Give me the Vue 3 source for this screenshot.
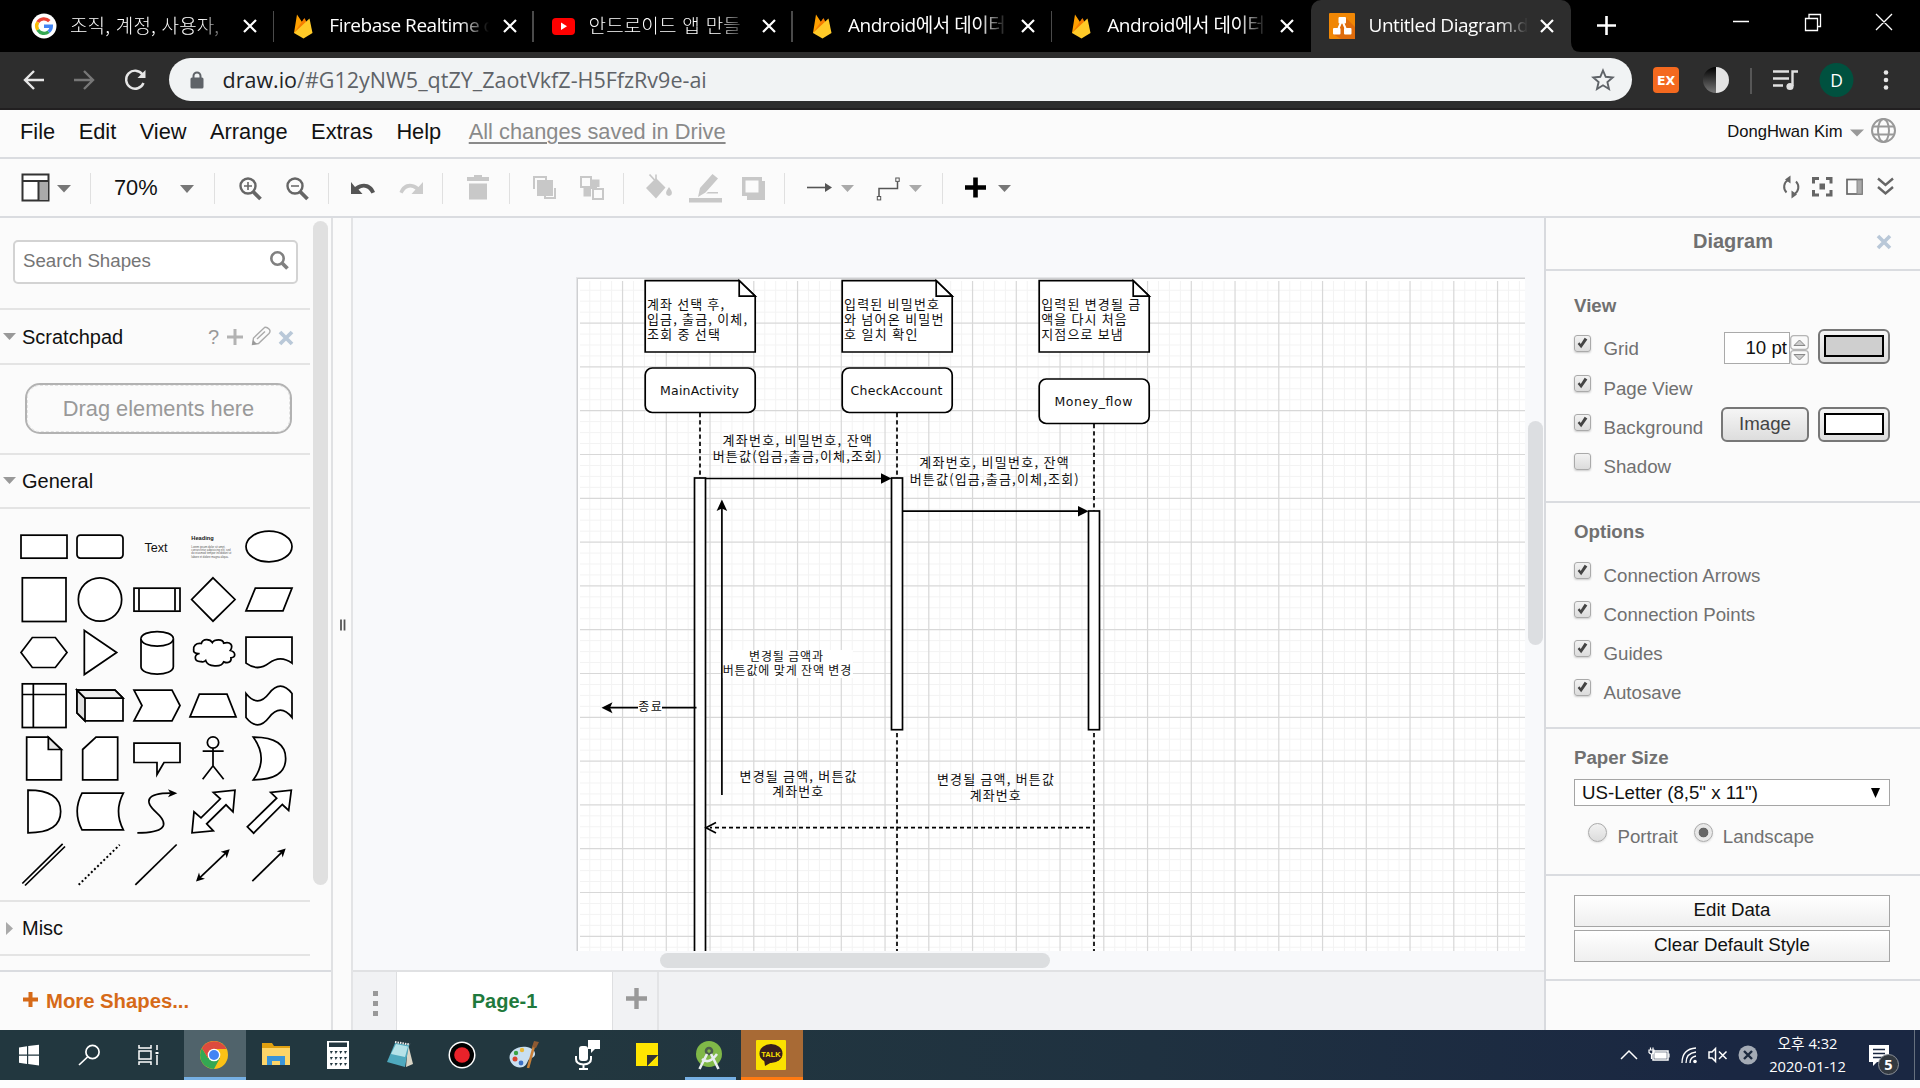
<script setup>
const tabs = [
  { icon: 'google', title: '조직, 계정, 사용자,', ko: true },
  { icon: 'firebase', title: 'Firebase Realtime d' },
  { icon: 'youtube', title: '안드로이드 앱 만들', ko: true },
  { icon: 'firebase', title: 'Android에서 데이터' },
  { icon: 'firebase', title: 'Android에서 데이터' },
  { icon: 'drawio', title: 'Untitled Diagram.d', active: true },
]
const menus = ['File', 'Edit', 'View', 'Arrange', 'Extras', 'Help']

const shapes = [
  '<rect x="-69" y="-34" width="138" height="69"/>',
  '<rect x="-69" y="-34" width="138" height="69" rx="10"/>',
  '<text x="-3" y="17" text-anchor="middle" font-size="38" class="t">Text</text>',
  '<g class="t"><text x="-65" y="-21" font-size="17" font-weight="bold" textLength="67">Heading</text><g font-size="8.4" fill="#555"><text x="-65" y="3" textLength="102">Lorem ipsum dolor sit amet,</text><text x="-65" y="13" textLength="118">consectetur adipisicing elit, sed</text><text x="-65" y="23" textLength="120">do eiusmod tempor incididunt ut</text><text x="-65" y="34" textLength="112">labore et dolore magna aliqua.</text></g></g>',
  '<ellipse rx="69" ry="46"/>',
  '<rect x="-65" y="-65" width="131" height="131"/>',
  '<circle r="65"/>',
  '<rect x="-69" y="-34" width="138" height="69"/><path d="M-54-34V34M54-34V34"/>',
  '<path d="M0-65L66 0L0 65L-64 0Z"/>',
  '<path d="M-69 34L-41-34H69L42 34Z"/>',
  '<path d="M-69 0L-35-45H34L69 0L34 45H-35Z"/>',
  '<path d="M-47-66L50 0L-47 66Z"/>',
  '<path d="M-48-41C-48-70 49-70 49-41V43C49 72-48 72-48 43Z"/><path d="M-48-41C-48-12 49-12 49-41"/>',
  '<path d="M-35-27C-52-30-60-18-58-8C-60 0-52 4-40 3C-58 6-58 28-36 27C-30 30-26 28-22 24C-16 44 26 46 32 28C46 34 56 28 54 16C70 14 68-2 52-6C62-22 52-34 32-28C30-42 4-40-2-30C-8-40-30-44-35-27Z"/>',
  '<path d="M-69-46H69V32Q34 6 0 32T-69 32Z"/>',
  '<rect x="-65" y="-65" width="131" height="131"/><path d="M-32-65V65M-65-33H65"/>',
  '<path d="M-69-46H45L69-22V46H-45L-69 22Z"/><path d="M-69-46L-45-22V46L-69 22Z" fill="#e0e0e0"/><path d="M-69-46H45L69-22H-45Z" fill="#eee"/>',
  '<path d="M-69-46H45L69 0L45 46H-69L-45 0Z"/>',
  '<path d="M-69 34L-41-34H42L69 34Z"/>',
  '<path d="M-69-36Q-34 8 0-36T69-36V36Q34-8 0 36T-69 36Z"/>',
  '<path d="M-52-64H13L52-27V64H-52Z"/><path d="M13-64V-27H52Z" fill="#e6e6e6"/>',
  '<path d="M-12-64H53V64H-52V-27Z"/>',
  '<path d="M-69-46H69V12H21L0 48V12H-69Z"/>',
  '<circle cy="-48" r="17"/><path d="M0-31V22M-31-22H32M-31 62L0 22L32 62"/>',
  '<path d="M-47-64Q50-64 50 0T-47 64Q0 0-47-64Z"/>',
  '<path d="M-48-64Q50-64 50 0T-48 64Z"/>',
  '<path d="M-54-55H70Q41 0 70 55H-54Q-83 0-54-55Z"/>',
  '<path d="M-59 64C20 64 40 42 0 5C-42-32-30-55 40-55" fill="none"/><path d="M61-55L33-67L40-55L33-43Z" fill="#000" stroke="none"/>',
  '<path d="M66-64L60 1L39-20L-19 37L1 58L-63 64L-57 1L-36 19L22-38L1-57Z"/>',
  '<path d="M67-64L59-3L40-21L-46 65L-65 46L23-40L5-57Z"/>',
  '<path d="M-65 57L56-62M-57 63L63-54"/>',
  '<path d="M-64 61L59-59" stroke-width="6" stroke-dasharray="6 7"/>',
  '<path d="M-65 61L59-60"/>',
  '<path d="M-44 44L42-38"/><path d="M-51 51L-42 24L-38 38L-24 43ZM50-46L41-19L37-33L23-38Z" fill="#000" stroke="none"/>',
  '<path d="M-50 50L42-40"/><path d="M50-48L41-21L37-35L23-40Z" fill="#000" stroke="none"/>',
]

const GX = 578.8
const GY = 279.3
const minorX = Array.from({ length: 87 }, (_, i) => GX + i * 10.9375).filter((_, i) => i % 4)
const minorY = Array.from({ length: 62 }, (_, i) => GY + i * 10.95).filter((_, i) => i % 4)
const majorX = Array.from({ length: 21 }, (_, i) => GX + (i + 1) * 43.75)
const majorY = Array.from({ length: 15 }, (_, i) => GY + (i + 1) * 43.8)

const notes = [645, 842, 1039]
const actors = [
  { x: 645, y: 368, t: 'MainActivity', w: 79 },
  { x: 842, y: 368, t: 'CheckAccount', w: 92 },
  { x: 1039, y: 379, t: 'Money_flow', w: 78 },
]
const noteLines = [
  [647, 308.5, 77, '계좌 선택 후,'], [647, 324, 100, '입금, 출금, 이체,'], [647, 338.5, 73, '조회 중 선택'],
  [844, 308.5, 95, '입력된 비밀번호'], [844, 324, 99.5, '와 넘어온 비밀번'], [844, 338.5, 73.5, '호 일치 확인'],
  [1041.2, 308.5, 99, '입력된 변경될 금'], [1041.2, 324, 85.5, '액을 다시 처음'], [1041.2, 338.5, 81.5, '지점으로 보냄'],
]
const labels = [
  [797.2, 444.5, 149.5, '계좌번호, 비밀번호, 잔액'], [797.2, 461, 169, '버튼값(입금,출금,이체,조회)'],
  [994, 466.5, 149.5, '계좌번호, 비밀번호, 잔액'], [994.2, 483.5, 169, '버튼값(입금,출금,이체,조회)'],
  [798, 780.5, 117, '변경될 금액, 버튼값'], [797.7, 795.5, 51, '계좌번호'],
  [995.4, 783.5, 117, '변경될 금액, 버튼값'], [995.2, 799.5, 51, '계좌번호'],
]
const viewRows = ['Grid', 'Page View', 'Background', 'Shadow']
const optionRows = ['Connection Arrows', 'Connection Points', 'Guides', 'Autosave']
</script>

<template>
  <div class="screen">
    <!-- Browser tab strip -->
    <div class="tabstrip">
      <div v-for="(t, i) in tabs" :key="i" class="tab" :class="{ active: t.active, last: i === 4, ko: t.ko }">
        <svg v-if="t.icon === 'google'" class="fav" viewBox="0 0 26 26">
          <circle cx="13" cy="13" r="12.5" fill="#fff" />
          <g fill="none" stroke-width="3.4">
            <path d="M18.3 8.2A7.3 7.3 0 0 0 6.8 9.2" stroke="#ea4335" />
            <path d="M6.8 9.2a7.3 7.3 0 0 0 0 7.7" stroke="#fbbc05" />
            <path d="M6.8 16.9a7.3 7.3 0 0 0 10.8 1.8" stroke="#34a853" />
            <path d="M17.6 18.7A7.3 7.3 0 0 0 20.3 13.2H13" stroke="#4285f4" />
          </g>
        </svg>
        <svg v-else-if="t.icon === 'firebase'" class="fav" viewBox="0 0 26 26">
          <path d="M4 20L7 1.5L12 9L14 6L22 20Z" fill="#ffa000" />
          <path d="M4 20L14.5 5L17 10Z" fill="#f57c00" />
          <path d="M4 20L19.5 5.5L22.5 20L13.5 25.5Z" fill="#ffca28" />
        </svg>
        <svg v-else-if="t.icon === 'youtube'" class="fav" viewBox="0 0 26 26">
          <rect x="2" y="5" width="23" height="17" rx="4" fill="#f00" /><path d="M11 9.5V17L17 13.2Z" fill="#fff" />
        </svg>
        <svg v-else class="fav" viewBox="0 0 26 26">
          <rect width="26" height="26" rx="1" fill="#f08705" /><path d="M16 4L26 14V26H12L4 21Z" fill="#df6c0c" />
          <path d="M13 7L8 19M13 7L18 19" stroke="#fff" stroke-width="2" />
          <g fill="#fff"><rect x="9.5" y="4" width="7.5" height="6.5" rx="1" /><rect x="4" y="15" width="7.5" height="6.5" rx="1" /><rect x="15" y="15" width="7.5" height="6.5" rx="1" /></g>
        </svg>
        <span class="title">{{ t.title }}</span>
        <svg class="close" viewBox="0 0 14 14"><path d="M1 1L13 13M13 1L1 13" stroke="#fff" stroke-width="2.2" /></svg>
      </div>
      <svg class="stripend" viewBox="1571 0 349 52" fill="none" stroke="#fff">
        <path d="M1571 52h10q-10 0-10-10z" fill="#2d2d2d" stroke="none" />
        <path d="M1597 25.5h19M1606.500 16v19" stroke-width="2.6" />
        <path d="M1733 21.500h16M1805.500 18.500h12v12h-12zM1809 18v-3.500h11.500v12h-3M1876 14l16 16M1892 14l-16 16" stroke-width="1.3" />
      </svg>
    </div>

    <!-- Navigation bar -->
    <div class="navbar">
      <svg class="navleft" viewBox="0 52 169 56" fill="none" stroke-width="2.4">
        <path d="M44 80H25M34 71L25 80L34 89" stroke="#e6e6e6" />
        <path d="M74 80H93M84 71L93 80L84 89" stroke="#777" />
        <path d="M142.500 74.500A9 9 0 1 0 143.500 83" stroke="#e6e6e6" /><path d="M145.500 70V78H137.500Z" fill="#e6e6e6" />
      </svg>
      <div class="omnibox">
        <svg width="14" height="18" viewBox="0 0 14 18"><rect x="0.500" y="6.500" width="13" height="11" rx="1.500" fill="#5f6368" /><path d="M3.500 8V5a3.500 3.500 0 0 1 7 0V8" fill="none" stroke="#5f6368" stroke-width="2" /></svg>
        <span class="url"><b>draw.io</b>/#G12yNW5_qtZY_ZaotVkfZ-H5FfzRv9e-ai</span>
        <svg width="24" height="24" viewBox="0 0 24 24"><path d="M12 2.500L14.700 8.800L21.700 9.500L16.400 14.100L18 21L12 17.300L6 21L7.600 14.100L2.300 9.500L9.300 8.800Z" fill="none" stroke="#5f6368" stroke-width="1.900" /></svg>
      </div>
      <svg class="navright" viewBox="1632 52 288 56">
        <defs><linearGradient id="cg" x2="0" y2="1"><stop stop-color="#000" /><stop offset="1" stop-color="#777" /></linearGradient></defs>
        <rect x="1653" y="67" width="26" height="26" rx="4" fill="#f4691f" />
        <text x="1666" y="84.500" text-anchor="middle" font-size="12.500" font-weight="bold" fill="#fff" font-family="DejaVu Sans">EX</text>
        <path d="M1716 67a13 13 0 0 0 0 26z" fill="url(#cg)" /><path d="M1716 67a13 13 0 0 1 0 26z" fill="#e4e4e4" />
        <path d="M1751 68v26" stroke="#666" stroke-width="1.500" />
        <path d="M1773 71.500h16M1773 78.500h16M1773 85.500h10M1798 71.500h-5.500V86" stroke="#e0e0e0" stroke-width="2.400" fill="none" /><circle cx="1790" cy="86.500" r="3.600" fill="#e0e0e0" />
        <circle cx="1836.500" cy="80" r="17" fill="#00513f" />
        <text x="1836.500" y="86.500" text-anchor="middle" font-size="17.500" fill="#fff" font-family="Open Sans">D</text>
        <g fill="#e6e6e6"><circle cx="1886" cy="72.500" r="2.300" /><circle cx="1886" cy="80" r="2.300" /><circle cx="1886" cy="87.500" r="2.300" /></g>
      </svg>
    </div>

    <!-- Editor menu bar -->
    <div class="menubar">
      <span v-for="m in menus" :key="m">{{ m }}</span>
      <u>All changes saved in Drive</u>
      <span class="user">DongHwan Kim</span>
      <svg class="globe" viewBox="1843 110 77 47" fill="none" stroke="#999" stroke-width="2">
        <path d="M1850 129.500h14l-7 7z" fill="#999" stroke="none" />
        <circle cx="1883.500" cy="130.500" r="11.500" /><ellipse cx="1883.500" cy="130.500" rx="5.500" ry="11.500" /><path d="M1873 126.500h21M1873 134.500h21" />
      </svg>
    </div>

    <!-- Editor toolbar -->
    <div class="toolbar">
      <svg class="g g1" viewBox="0 159 91 57"><rect x="22.500" y="174.500" width="26" height="26" fill="#fff" stroke="#333" stroke-width="2" /><rect x="39" y="181" width="9" height="19" fill="#aaa" /><path d="M22 181h27M38.500 181v20" stroke="#333" stroke-width="2" /><path d="M57 185h14l-7 7.500z" fill="#777" /></svg>
      <div class="g g2"><span>70%</span><svg viewBox="0 0 14 8"><path d="M0 0h14l-7 8z" fill="#777" /></svg></div>
      <svg class="g g3" viewBox="215 159 114 57" fill="none" stroke="#666">
        <g stroke-width="2.400"><circle cx="248" cy="186" r="7.500" /><circle cx="295" cy="186" r="7.500" /></g><path d="M253 191.500L260.500 199M300 191.500L307.500 199" stroke-width="3.800" /><path d="M244 186h8M248 182v8M291 186h8" stroke-width="1.600" />
      </svg>
      <svg class="g g3" viewBox="329 159 114 57"><path d="M351 182v12h11.500l-4-4.500c5-4 10-2 13 4l3.500-1.500c-3-8.500-12-11-20-5z" fill="#555" /><path d="M423 182v12h-11.500l4-4.500c-5-4-10-2-13 4l-3-1.500c3-8.500 11-11 19-5z" fill="#ccc" /></svg>
      <svg class="g g5" viewBox="443 159 67 57" fill="#c8c8c8"><path d="M467 177h7v-2h8v2h7v4h-22zM469 183.500h18v16h-18z" /></svg>
      <svg class="g g3" viewBox="510 159 114 57" fill="none" stroke="#c8c8c8" stroke-width="2"><rect x="538" y="181" width="14" height="14" fill="#c8c8c8" /><path d="M535 188h-1v-11h12v3M555 188v10h-10v-3" /><rect x="581" y="177" width="10" height="10" /><path d="M592 181h6v6M585 188v7h6" fill="#c8c8c8" stroke-width="3" /><path d="M586 182h10v6h-6v6h-4z" fill="#c8c8c8" /><rect x="593" y="189" width="10" height="10" fill="#fbfbfb" /><rect x="581" y="177" width="10" height="10" fill="#fbfbfb" /></svg>
      <svg class="g g7" viewBox="624 159 161 57" fill="#c8c8c8"><path d="M649.500 174.500l6 6.500" stroke="#c8c8c8" stroke-width="1.800" /><path d="M656 174.500v9" stroke="#c8c8c8" stroke-width="1.600" /><path d="M656 178l9.500 9.500l-9.500 11l-10-10.500zM669 187q6 8 0 9q-6-1 0-9zM689 198h33v4.500h-33zM698 197l2-9l12.500-14l5.500 4.500l-12.500 14zM708 192h10v1.500h-12z" /><path d="M742 177h20v4h3v19h-18v-4h-5zM745.500 180.500v12h13v-12z" fill-rule="evenodd" /></svg>
      <svg class="g g8" viewBox="785 159 158 57" fill="none" stroke="#555"><path d="M807 187.500h20" stroke-width="1.600" /><path d="M825 183l7 4.500l-7 4.500z" fill="#555" stroke="none" /><path d="M841 185h13l-6.500 7zM909 185h13l-6.500 7z" fill="#aaa" stroke="none" /><path d="M879 196v-7.500h18.500V182" stroke-width="1.500" /><rect x="877.300" y="196.500" width="3.400" height="3.400" /><rect x="895.800" y="178" width="3.400" height="3.400" /></svg>
      <svg class="g g9" viewBox="943 159 100 57"><path d="M965 187.500h21M975.500 177.500v20" stroke="#000" stroke-width="4.600" /><path d="M998 185h13l-6.500 7z" fill="#777" /></svg>
      <svg class="g gr" viewBox="1770 159 150 57" fill="none" stroke="#666" stroke-width="2">
        <path d="M1788 180a8 8 0 0 0-1.500 12.500M1794.500 194a8 8 0 0 0 1.500-12.500" /><path d="M1788 187" /><path d="M1790.500 175.500v8l-5.500-4zM1791.500 190.500v8l5.500-4z" fill="#666" stroke="none" />
        <path d="M1819 178.500h-5.500v5M1826 178.500h5v5M1819 195h-5.500v-5M1826 195h5v-5" stroke-width="3" /><rect x="1819.500" y="183.500" width="5.500" height="6" fill="#666" stroke="none" />
        <rect x="1847" y="179.500" width="15" height="14.500" stroke-width="1.700" /><path d="M1857 180v14h5v-14z" fill="#aaa" stroke-width="1" stroke="#888" />
        <path d="M1878 178.500l7.500 6.500l7.500-6.500M1878 187l7.500 6.500l7.500-6.500" stroke-width="2.400" />
      </svg>
    </div>

    <!-- Editor body -->
    <div class="body">
      <aside class="side">
        <div class="sidescroll">
          <div class="sections">
            <div class="searchwrap">
              <div class="search"><span>Search Shapes</span>
                <svg width="19" height="20" viewBox="0 0 19 20" fill="none" stroke="#808080"><circle cx="7.500" cy="7.500" r="6.200" stroke-width="2.600" /><path d="M12 12L17.500 17.500" stroke-width="3.800" /></svg>
              </div>
            </div>
            <div class="head h1">
              <svg class="car" viewBox="0 0 13 8"><path d="M0 0h13l-6.500 7z" fill="#999" /></svg><span>Scratchpad</span>
              <i>?</i>
              <svg class="padicons" viewBox="226 324 72 24" fill="none">
                <path d="M227 336h16M235 328v16" stroke="#b3b3b3" stroke-width="3" />
                <path d="M252.500 343.500l1-6.500l11-10.500q2-1 4.500 1.500q2 2 0 4.500l-10.500 10zM257 338l8-7.500M260 341l8-7.500" stroke="#aaa" stroke-width="1.400" /><path d="M252 344l1-5l4 4z" fill="#999" />
                <path d="M280 331l12 12M292 331l-12 12" stroke="#b9c8d8" stroke-width="3.800" />
              </svg>
            </div>
            <div class="drop"><div>Drag elements here</div></div>
            <div class="head h2"><svg class="car" viewBox="0 0 13 8"><path d="M0 0h13l-6.500 7z" fill="#999" /></svg><span>General</span></div>
            <div class="palette">
              <svg v-for="(s, i) in shapes" :key="i" viewBox="-84 -79.500 168 159" v-html="s"></svg>
            </div>
            <div class="head h3"><svg class="car r" viewBox="0 0 8 13"><path d="M0 0v13l7-6.500z" fill="#aaa" /></svg><span>Misc</span></div>
          </div>
          <div class="sbar"></div>
        </div>
        <div class="more">
          <svg width="15" height="15" viewBox="0 0 15 15"><path d="M0 7.500h15M7.500 0v15" stroke="#d66a18" stroke-width="4" /></svg>More Shapes...
        </div>
      </aside>
      <div class="split"><svg width="8" height="12" viewBox="0 0 8 12"><path d="M2 0.500v11M5.500 0.500v11" stroke="#555" stroke-width="1.800" /></svg></div>

      <main class="center">
        <div class="stage">
          <svg class="diagram" viewBox="353 218 1172 733" fill="#fff" stroke="#000" stroke-width="1.700">
            <rect x="576" y="277" width="960" height="700" fill="#e4e5e7" stroke="none" />
            <rect x="577.500" y="278.500" width="960" height="700" fill="#fff" stroke="#cfd0d2" stroke-width="1" />
            <g stroke="#f3f3f3" stroke-width="1"><path v-for="x in minorX" :key="'a' + x" :d="`M${x} 281V951`" /><path v-for="y in minorY" :key="'b' + y" :d="`M580 ${y}H1525`" /></g>
            <g stroke="#d8d8d8" stroke-width="1.200"><path v-for="x in majorX" :key="'c' + x" :d="`M${x} 281V951`" /><path v-for="y in majorY" :key="'d' + y" :d="`M580 ${y}H1525`" /></g>
            <g v-for="x in notes" :key="'n' + x"><path :d="`M${x + 0.200} 280.700h94l16 15.500v55.800h-110z`" /><path :d="`M${x + 94.200} 280.700v15.500h16z`" /></g>
            <g stroke-dasharray="4.200 3"><path d="M700 413V478M897 413V478M1094 424V511M897 733V951M1094 733V951" /></g>
            <g v-for="a in actors" :key="a.t">
              <rect :x="a.x + 0.200" :y="a.y" width="110" height="44.500" rx="7" />
              <text class="lat" :x="a.x + 54.500" :y="a.y + 27" text-anchor="middle" :textLength="a.w">{{ a.t }}</text>
            </g>
            <rect x="694.500" y="478" width="11" height="490" /><rect x="891.500" y="478" width="11" height="251.700" /><rect x="1088.500" y="511" width="11" height="218.700" />
            <path d="M706 478.500H884M903 511.200H1081M721.900 795V508M696.500 707.700H608" />
            <path d="M891.500 478.500l-10.500-5.200v10.400zM1088.500 511.200l-10.500-5.200v10.400zM721.900 499.500l-5.300 11.500l5.300-2.500l5.300 2.500zM601.500 707.700l11-5.500l-2.500 5.500l2.500 5.500z" fill="#000" stroke="none" />
            <path d="M1090 827.700H710" stroke-dasharray="4 3" /><path d="M716 822.500l-10 5.200l10 5.200" fill="none" />
            <rect x="722.900" y="650" width="130" height="28" stroke="none" /><rect x="638" y="700" width="24" height="13" stroke="none" />
            <text v-for="(l, i) in noteLines" :key="'l' + i" :x="l[0]" :y="l[1]" :textLength="l[2]">{{ l[3] }}</text>
            <g text-anchor="middle">
              <text v-for="(l, i) in labels" :key="'m' + i" :x="l[0]" :y="l[1]" :textLength="l[2]">{{ l[3] }}</text>
              <g class="small"><text x="786" y="660.800" textLength="74">변경될 금액과</text><text x="787" y="674.800" textLength="128.500">버튼값에 맞게 잔액 변경</text><text x="650" y="710.500" textLength="23.500">종료</text></g>
            </g>
          </svg>
          <div class="vtrack"><div class="vthumb"></div></div>
        </div>
        <div class="htrack"><div class="hthumb"></div></div>
        <div class="pages">
          <div class="dots"><i></i><i></i><i></i></div>
          <div class="page">Page-1</div>
          <div class="add"><svg width="21" height="21" viewBox="0 0 21 21"><path d="M0 10.500h21M10.500 0v21" stroke="#999" stroke-width="4.400" /></svg></div>
        </div>
      </main>

      <aside class="format">
        <div class="ftitle"><span>Diagram</span><svg width="16" height="16" viewBox="0 0 16 16"><path d="M2 2l12 12M14 2L2 14" stroke="#b9c8d8" stroke-width="3.600" /></svg></div>
        <section class="s1">
          <h4>View</h4>
          <div v-for="(r, i) in viewRows" :key="r" class="row">
            <span class="chk"><svg v-if="i < 3" viewBox="0 0 17 17"><path d="M3 9l4 5l7-10l-3-2l-4.500 7l-1.500-2z" fill="#444" /></svg></span>
            <label>{{ r }}</label>
            <template v-if="i === 0">
              <span class="num">10 pt</span>
              <svg class="spin" viewBox="0 0 19 30" fill="#fafafa" stroke="#b5b5b5"><rect x="0.700" y="0.700" width="17.600" height="13.600" rx="3" stroke-width="1.300" /><rect x="0.700" y="15.700" width="17.600" height="13.600" rx="3" stroke-width="1.300" /><path d="M4 10.500h11l-5.500-5.500zM4 19.500h11l-5.500 5.500z" fill="#ccc" stroke="#888" /></svg>
              <span class="color"><b class="grey"></b></span>
            </template>
            <template v-if="i === 2"><span class="imgbtn">Image</span><span class="color c2"><b></b></span></template>
          </div>
        </section>
        <section class="s2">
          <h4>Options</h4>
          <div v-for="r in optionRows" :key="r" class="row">
            <span class="chk"><svg viewBox="0 0 17 17"><path d="M3 9l4 5l7-10l-3-2l-4.500 7l-1.500-2z" fill="#444" /></svg></span><label>{{ r }}</label>
          </div>
        </section>
        <section class="s3">
          <h4>Paper Size</h4>
          <div class="select"><span>US-Letter (8,5" x 11")</span><svg width="9" height="10" viewBox="0 0 9 10"><path d="M0 0h9l-4.500 10z" /></svg></div>
          <div class="radios"><span class="radio"></span><label>Portrait</label><span class="radio on"></span><label>Landscape</label></div>
        </section>
        <section class="s4"><div class="btn">Edit Data</div><div class="btn">Clear Default Style</div></section>
      </aside>
    </div>

    <!-- Windows taskbar -->
    <div class="taskbar">
      <div class="app"><svg viewBox="-30 -25 60 50" fill="#fff"><path d="M-10-7.500L-2-8.700V-.5H-10zM-.8-8.900L10-10.300V-.5H-.8zM-10 .8H-2V9L-10 7.800zM-.8 .8H10V10.500L-.8 9z" /></svg></div>
      <div class="app"><svg viewBox="-30 -25 60 50" fill="none" stroke="#fff" stroke-width="1.700"><circle cx="3.500" cy="-3" r="6.600" /><path d="M-1.500 2L-10 10" /></svg></div>
      <div class="app tv"><svg viewBox="-30 -25 60 50" fill="none" stroke="#fff" stroke-width="1.500"><path d="M-9-10V-7H3V-10M-9 10V7H3V10M9-10V-5M9 0V10" /><rect x="-9" y="-4" width="12" height="8" /><path d="M7.500-3h3v2h-3z" fill="#fff" stroke="none" /></svg></div>
      <div class="app on"><svg viewBox="-30 -25 60 50"><circle r="14" fill="#fbc116" /><path d="M-12.100-7A14 14 0 0 0 0 14L6 3L-6 3Z" fill="#34a853" /><path d="M-12.100-7L-6 3L0-6H12.500A14 14 0 0 0-12.100-7Z" fill="#dd4b3e" /><circle r="6.300" fill="#fff" /><circle r="5" fill="#4285f4" /></svg></div>
      <div class="app"><svg viewBox="-30 -25 60 50"><path d="M-14-12h10l2 3h16v19h-28z" fill="#e0a010" /><path d="M-14-7h28v17h-28z" fill="#fdd568" /><path d="M-9 10V1h18v9h-5V6h-8v4z" fill="#3a94d8" /></svg></div>
      <div class="app"><svg viewBox="-30 -25 60 50"><path d="M-11-14h22V14h-22z" fill="#fff" /><path d="M-9-12.500H9V-8H-9z" fill="#22363f" /><g fill="#22363f"><path v-for="k in 12" :key="k" :d="`M${-8 + ((k - 1) % 4) * 4.700} ${-4 + Math.floor((k - 1) / 4) * 6}h3l-2 3z`" /></g></svg></div>
      <div class="app"><svg viewBox="-30 -25 60 50"><path d="M8-11L13 9L6 12Z" fill="#d9d5c6" /><path d="M-5-12L9-10L5 12L-13 7Z" fill="#4fa9be" /><path d="M-4-11L8-8.500L5 2L-9-1Z" fill="#b5e2e8" /><path d="M-5-13l15 2.500" stroke="#eee" stroke-width="2" stroke-dasharray="1.500 1" /></svg></div>
      <div class="app"><svg viewBox="-30 -25 60 50"><circle r="13.500" fill="#fff" /><circle r="12" /><circle r="7.800" fill="#e8222a" /></svg></div>
      <div class="app"><svg viewBox="-30 -25 60 50"><path d="M-14 5C-17-3-6-10 3-8C13-6 13 2 7 3C3 4 4 10-1 12C-8 14-13 9-14 5Z" fill="#c9dff0" /><circle cx="-9" cy="4" r="2.500" fill="#d8442e" /><circle cx="-8" cy="-2" r="2.200" fill="#3aa345" /><circle cx="-2" cy="-5" r="2.200" fill="#e8b83a" /><circle cx="-3" cy="8" r="2.400" fill="#3b6fc4" /><path d="M10-9L4 13" stroke="#c98038" stroke-width="2.600" /><path d="M8-8l2-6l5 1l-3 6z" fill="#8d5a33" /></svg></div>
      <div class="app"><svg viewBox="-30 -25 60 50"><rect x="-7" y="-9" width="9" height="15" rx="3" fill="#fff" /><path d="M2-15h12v9h-5l-4 4v-4h-3z" fill="#fff" /><path d="M-10 1v3q0 5 7.500 5.500q7.500-.5 7.500-5.500V1M-2.500 9v5M-7 14h9" fill="none" stroke="#fff" stroke-width="2" /></svg></div>
      <div class="app"><svg viewBox="-30 -25 60 50"><path d="M-11-12H11V0H0V11H-11z" fill="#ffe500" /><path d="M0 11H11V0z" fill="#ffe500" /><path d="M0 11V0H11z" fill="#333" /></svg></div>
      <div class="app run"><svg viewBox="-30 -25 60 50"><circle cy="-1" r="13" fill="#80b848" /><circle cy="-4" r="3" fill="none" stroke="#4c5d4d" stroke-width="2.600" /><path d="M-9.500 14L-2-1M9.500 14L2-1M-7 4Q0 10 8-1" fill="none" stroke="#e8edf0" stroke-width="2.600" /></svg></div>
      <div class="app talk"><svg viewBox="-30 -25 60 50"><rect x="-15" y="-15" width="30" height="30" rx="1" fill="#fae100" /><ellipse cy="-1.500" rx="11.500" ry="9.500" fill="#371d1e" /><path d="M-7 4L-6 11L1 7Z" fill="#371d1e" /><text y="1.500" text-anchor="middle" font-size="7.500" font-weight="bold" fill="#fae100" font-family="Liberation Sans">TALK</text></svg></div>
      <svg class="tray" viewBox="1610 1030 155 50" fill="none" stroke="#fff" stroke-width="1.500">
        <path d="M1621 1059l8-8l8 8" /><rect x="1653" y="1051" width="15" height="9" /><path d="M1655 1053h11v5h-11z" fill="#fff" /><path d="M1669 1053.500v4M1649 1050v2.500q2.500 3 5 0v-2.500zM1650.500 1047.500v2M1653 1047.500v2M1651.500 1054v5" stroke-width="1.200" />
        <path d="M1682 1063q0-14 14-15M1686 1063q0-10 10-11M1690 1063q0-6 6-7" stroke-width="1.300" /><circle cx="1695" cy="1061.500" r="1.800" fill="#fff" stroke="none" />
        <path d="M1709 1052h3l3.500-3.500v13l-3.500-3.500h-3zM1719 1051.500l7.500 7.500M1726.500 1051.500l-7.500 7.500" />
        <circle cx="1748" cy="1055" r="9.500" fill="#a4abb5" stroke="none" /><path d="M1744 1051l8 8M1752 1051l-8 8" stroke="#1c2a3f" stroke-width="2.400" />
      </svg>
      <div class="clock"><span>오후 4:32</span><span>2020-01-12</span></div>
      <svg class="notif" viewBox="1850 1030 70 50"><path d="M1869 1045h20v17h-12l-4 4v-4h-4z" fill="#fff" /><path d="M1873 1049.500h12M1873 1053.500h12M1873 1057.500h12" stroke="#1a2740" stroke-width="1.300" /><circle cx="1888.500" cy="1064.500" r="10" fill="#333940" stroke="#8a8f96" /><text x="1888.500" y="1070" text-anchor="middle" font-size="14.500" font-weight="bold" fill="#fff" font-family="Open Sans">5</text><path d="M1914.500 1030v50" stroke="#66707e" /></svg>
    </div>
  </div>
</template>

<style>
body { background: #fff; overflow: hidden; }
</style>

<style scoped>
* { box-sizing: border-box; }
.screen { width: 1920px; height: 1088px; background: #fdfdfd; font-family: "Liberation Sans", "Noto Sans CJK KR", sans-serif; display: flex; flex-direction: column; overflow: hidden; color: #111; white-space: nowrap; }
svg { display: block; flex: none; }

.tabstrip { height: 52px; background: #000; display: flex; padding-left: 15px; flex: none; }
.tab { width: 259.3px; display: flex; align-items: center; padding: 0 17px 0 16px; color: #fff; font: 19px "Open Sans", "Noto Sans CJK KR", sans-serif; position: relative; flex: none; }
.tab::after { content: ""; position: absolute; right: 0; top: 11px; height: 31px; width: 1.500px; background: #4a4a4a; }
.tab.active::after, .tab.last::after { display: none; }
.tab.last { border-bottom-right-radius: 10px; }
.tab.active { background: #2d2d2d; border-radius: 10px 10px 0 0; padding-left: 18px; }
.fav { width: 26px; height: 26px; }
.title { margin-left: 13px; width: 160px; overflow: hidden; letter-spacing: -.45px; line-height: 48px; padding-bottom: 3px; -webkit-mask-image: linear-gradient(90deg, #000 82%, transparent); mask-image: linear-gradient(90deg, #000 82%, transparent); }
.ko .title { font-family: "Noto Sans CJK KR", sans-serif; letter-spacing: .1px; word-spacing: 1.500px; font-weight: 300; }
.close { width: 14px; height: 14px; margin-left: auto; }
.stripend { width: 349px; height: 52px; margin-left: 0; }

.navbar { height: 58px; background: #2d2d2d; display: flex; border-bottom: 2px solid #211f20; flex: none; }
.navleft { width: 169px; height: 56px; }
.omnibox { width: 1463px; height: 43px; margin-top: 6px; border-radius: 22px; background: #f1f3f4; display: flex; align-items: center; padding: 0 17px 0 21px; }
.url { flex: 1; margin-left: 18.500px; font: 21.500px "Open Sans", sans-serif; color: #5f6368; }
.url b { font-weight: 400; color: #202124; }
.navright { width: 288px; height: 56px; }

.menubar { height: 49px; background: #fbfbfb; border-bottom: 2px solid #dadce0; display: flex; align-items: center; padding: 0 0 3px 20px; gap: 23.500px; font-size: 21.800px; flex: none; }
.menubar u { color: #8a8a8a; margin-left: 4px; text-underline-offset: 3px; text-decoration-thickness: 1.500px; }
.user { margin-left: auto; margin-right: -23px; font-size: 16.600px; }
.globe { width: 77px; height: 47px; margin: 3px 0 0; }

.toolbar { height: 59px; background: #fbfbfb; border-bottom: 2px solid #dadce0; display: flex; align-items: center; flex: none; }
.g { height: 57px; flex: none; background: linear-gradient(#e0e0e0, #e0e0e0) right 14px / 1.500px 31px no-repeat; }
.g1 { width: 91px; }
.g2 { width: 124px; display: flex; align-items: center; justify-content: space-between; padding: 1px 21px 0 23px; font-size: 21.800px; }
.g2 svg { width: 14px; height: 8px; margin-top: 1px; }
.g3 { width: 114px; }
.g5 { width: 67px; }
.g7 { width: 161px; }
.g8 { width: 158px; }
.g9 { width: 100px; background: none; }
.gr { width: 150px; margin-left: auto; background: none; }

.body { height: 812px; display: flex; flex: none; }
.side { width: 333px; background: #fbfbfb; border-right: 2px solid #e0e1e3; display: flex; flex-direction: column; }
.sidescroll { height: 752px; display: flex; justify-content: space-between; }
.sections { width: 310px; display: flex; flex-direction: column; }
.searchwrap { height: 92px; border-bottom: 2px solid #e4e4e4; padding: 22px 12px 0 13px; }
.search { height: 44px; border: 2px solid #d3d3d3; border-radius: 5px; background: #fff; display: flex; align-items: center; justify-content: space-between; padding: 0 7px 2px 8px; font-size: 18.700px; color: #757575; }
.search svg { margin-bottom: 1px; }
.head { display: flex; align-items: center; border-bottom: 2px solid #e4e4e4; font-size: 20px; flex: none; }
.head span { margin-left: 6px; }
.car { width: 13px; height: 8px; margin-left: 3px; }
.car.r { width: 8px; height: 13px; margin-left: 6px; margin-right: 2px; }
.h1 { height: 55px; }
.h1 span, .h1 i { padding-top: 1px; }
.head i { font-style: normal; color: #999; margin-left: auto; margin-right: 7px; }
.padicons { width: 72px; height: 24px; margin-right: 12px; }
.drop { height: 90px; border-bottom: 2px solid #e4e4e4; padding: 18px 18px 0 25px; }
.drop div { height: 51px; border: 2px solid #b2b2b2; border-radius: 15px; text-align: center; line-height: 47px; font-size: 21.800px; color: #999; outline: 1px dashed #e2e2e2; outline-offset: -3px; }
.h2 { height: 54px; }
.palette { height: 393px; border-bottom: 2px solid #e4e4e4; padding: 11px 0 0 16px; display: grid; grid-template-columns: repeat(5, 56.250px); grid-auto-rows: 53px; align-content: start; }
.palette svg { width: 56px; height: 53px; fill: #fff; stroke: #000; stroke-width: 5.2; overflow: visible; }
.palette :deep(.t) { stroke: none; fill: #111; }
.h3 { height: 54px; }
.sbar { width: 15px; height: 664px; margin: 3px 3px 0 0; border-radius: 8px; background: #e0e0e0; }
.more { height: 60px; border-top: 2px solid #dadce0; display: flex; align-items: center; gap: 8px; padding: 1px 0 0 23px; color: #d66a18; font-weight: bold; font-size: 20.300px; }
.more svg { margin-bottom: 5px; }
.split { width: 20px; background: #fbfbfb; border-right: 2px solid #e3e4e6; display: flex; align-items: center; justify-content: center; padding: 1px 0 0 2px; }

.center { width: 1191px; background: #f8f9fb; display: flex; flex-direction: column; }
.stage { height: 733px; display: flex; }
.diagram { width: 1172px; height: 733px; }
.diagram text { font: 400 13px/1 "Noto Sans CJK KR", sans-serif; fill: #111; stroke: none; }
.diagram .lat { font: 12.500px "DejaVu Sans", sans-serif; }
.diagram .small text { font-size: 12px; }
.vtrack { width: 19px; padding: 203px 0 0 3px; }
.vthumb { width: 15px; height: 224px; border-radius: 8px; background: #dcdee1; }
.htrack { height: 19px; padding: 2px 0 0 307px; }
.hthumb { width: 390px; height: 15px; border-radius: 8px; background: #dcdee0; }
.pages { height: 60px; border-top: 2px solid #e0e1e3; background: #f1f2f4; display: flex; }
.dots { width: 44px; display: flex; flex-direction: column; align-items: center; gap: 5px; padding: 19px 0 0 1px; border-right: 1px solid #dedfe1; }
.dots i { width: 5px; height: 5px; background: #999; flex: none; }
.page { width: 216px; background: #fff; color: #1f7a3d; font-weight: bold; font-size: 20px; text-align: center; line-height: 58px; border-right: 1px solid #dedfe1; }
.add { width: 46px; border-right: 2px solid #e3e4e6; padding: 16px 0 0 13px; }

.format { width: 376px; background: #fbfbfb; border-left: 2px solid #d8dade; color: #707070; font-size: 18.700px; }
.ftitle { height: 53px; border-bottom: 2px solid #dadce0; display: flex; align-items: center; padding: 0 28px 4px 147px; justify-content: space-between; font-weight: bold; font-size: 20px; }
section { border-bottom: 2px solid #dadce0; padding-left: 28px; }
h4 { margin: 0; font-size: 18.700px; line-height: 22px; }
.row { display: flex; height: 39px; position: relative; }
.s1 .row:nth-child(2) { height: 40px; }
.row label { margin-left: 12.500px; padding-top: 3px; line-height: 22px; width: 108.500px; }
.chk { width: 17px; height: 17px; border: 1.500px solid #aaa; border-radius: 3px; background: linear-gradient(#f2f2f2, #dcdcdc); box-shadow: 0 1px 2px #ccc; flex: none; }
.chk svg { width: 15px; height: 15px; }
.s1 { height: 232px; padding-top: 24px; }
.s1 h4 { height: 40px; line-height: 22px; }
.s2 { height: 226px; padding-top: 18px; }
.s2 h4 { height: 41px; }
.num { width: 66px; height: 32px; margin: -3px 0 0 12px; border: 1.500px solid #aaa; background: #fff; color: #111; text-align: right; padding-right: 2px; line-height: 29px; }
.spin { width: 19px; height: 30px; }
.color { width: 72px; height: 35px; margin: -6px 0 0 9px; border: 2px solid #777; border-radius: 6px; background: linear-gradient(#f5f5f5, #ddd); padding: 4px; }
.color b { display: block; height: 22px; border: 2px solid #000; background: #fff; }
.color .grey { background: #cfcfcf; }
.imgbtn { width: 88px; height: 35px; margin: -7px 0 0 9px; border: 2px solid #777; border-radius: 6px; background: linear-gradient(#f5f5f5, #ddd); color: #444; text-align: center; line-height: 30px; }
.c2 { margin-top: -7px; }
.s3 { height: 147px; padding-top: 18px; }
.s3 h4 { height: 32px; }
.select { width: 316px; height: 27px; border: 1.500px solid #a5a5a5; background: #fff; color: #111; display: flex; align-items: center; justify-content: space-between; padding: 0 9px 0 7px; }
.radios { display: flex; padding: 17px 0 0 14px; }
.radio { width: 19px; height: 19px; border: 1.500px solid #aaa; border-radius: 50%; background: linear-gradient(#f2f2f2, #dcdcdc); box-shadow: 0 1px 2px #ddd; }
.radio.on { background: radial-gradient(circle, #666 0 4.500px, #e8e8e8 5.200px); margin-left: 16px; }
.radios label { margin-left: 10.500px; line-height: 28px; }
.radios .on + label { margin-left: 10px; }
.s4 { height: 105px; padding-top: 19px; }
.btn { width: 316px; height: 32px; margin-bottom: 3px; border: 1.500px solid #a5a5a5; background: linear-gradient(#fff, #efefef); color: #111; text-align: center; line-height: 28px; }

.taskbar { height: 50px; background: linear-gradient(90deg, #22373f 30%, #1f3140 60%, #1a2742 90%); display: flex; flex: none; }
.app { width: 61.900px; display: flex; justify-content: center; flex: none; }
.app:nth-child(-n + 2) { width: 60px; }
.app.tv { width: 64px; padding-right: 6px; }
.app svg { width: 60px; height: 50px; position: relative; left: -.7px; }
.on.app { background: #50636b; box-shadow: inset 0 -3px #76b0e4; }
.run { background: linear-gradient(#76b0e4, #76b0e4) 50% 100% / 51px 3px no-repeat; }
.talk { background: #a86a35; box-shadow: inset 0 -3px #ff7a12; }
.tray { width: 155px; height: 50px; margin-left: auto; }
.clock { width: 85px; display: flex; flex-direction: column; align-items: center; color: #fff; font: 14.700px/23px "Open Sans", "Noto Sans CJK KR", sans-serif; padding-top: 2px; }
.notif { width: 70px; height: 50px; }
</style>
